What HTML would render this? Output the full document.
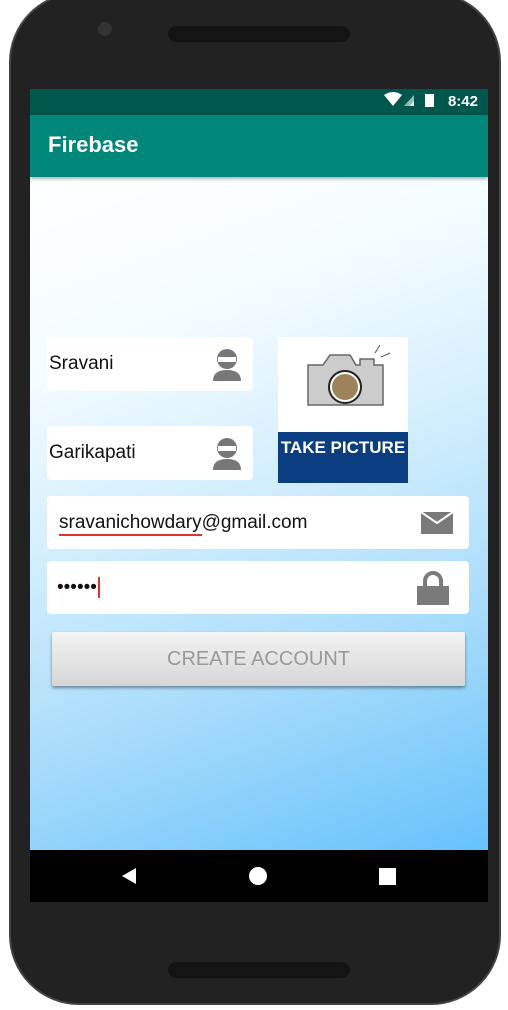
<!DOCTYPE html>
<html><head><style>
body{margin:0;width:508px;height:1010px;background:#fff;position:relative;overflow:hidden;font-family:"Liberation Sans",sans-serif}
.phone{position:absolute;left:9px;top:-8px;width:492px;height:1013px;background:#222;border-radius:70px;border:2px solid #444;box-sizing:border-box}
.screen{position:absolute;left:30px;top:89px;width:458px;height:813px;overflow:hidden}
.status{height:26px;background:#00574b;color:#fff;font-size:15px;font-weight:bold;text-align:right;padding-right:10px;line-height:26px;box-sizing:border-box}
.bar{height:62px;background:#00877a;color:#fff;font-size:22px;font-weight:bold;line-height:60px;padding-left:18px;box-shadow:0 2px 3px rgba(0,0,0,.3);position:relative;z-index:2}
.content{position:absolute;top:88px;left:0;width:458px;height:673px;background:linear-gradient(160deg,#fff 0%,#f2fbff 25%,#d4effd 45%,#a9dcfb 70%,#66c2fb 100%)}
.f{position:absolute;background:#fff;border-radius:4px;font-size:19px;color:#111;box-sizing:border-box;padding-left:2px}
.nav{position:absolute;top:761px;left:0;width:458px;height:52px;background:#000}
.btn{position:absolute;left:22px;top:455px;width:413px;height:54px;background:linear-gradient(#f3f3f3,#d6d6d6);box-shadow:0 2px 3px rgba(0,0,0,.4);border-radius:2px;color:#999;font-size:20px;text-align:center;line-height:54px}
</style></head><body>
<div class="phone">
<div style="position:absolute;left:87px;top:28px;width:14px;height:14px;border-radius:50%;background:#333"></div>
<div style="position:absolute;left:157px;top:32px;width:182px;height:16px;border-radius:8px;background:#141414"></div>
<div style="position:absolute;left:157px;top:968px;width:182px;height:16px;border-radius:8px;background:#141414"></div>
</div>
<div class="screen">
<div class="status"><svg width="60" height="16" viewBox="0 0 60 16" style="vertical-align:-2px"><path d="M0 3 Q9 -3 18 3 L9 14Z" fill="#fff"/><path d="M20 14 L30 3 V14Z" fill="#fff" opacity=".6"/><path d="M26 14 L30 9 V14Z" fill="#fff"/><rect x="41" y="2" width="9" height="13" fill="#fff"/></svg> 8:42</div>
<div class="bar">Firebase</div>
<div class="content">
<div class="f" style="left:17px;top:160px;width:206px;height:54px;line-height:54px">Sravani<svg style="position:absolute;right:10px;top:10px" width="32" height="34" viewBox="0 0 32 34"><circle cx="16" cy="12" r="10" fill="#777"/><rect x="7" y="10" width="18" height="5" fill="#fff"/><path d="M2 34 Q2 23 16 23 Q30 23 30 34Z" fill="#777"/></svg></div>
<div class="f" style="left:17px;top:249px;width:206px;height:54px;line-height:54px">Garikapati<svg style="position:absolute;right:10px;top:10px" width="32" height="34" viewBox="0 0 32 34"><circle cx="16" cy="12" r="10" fill="#777"/><rect x="7" y="10" width="18" height="5" fill="#fff"/><path d="M2 34 Q2 23 16 23 Q30 23 30 34Z" fill="#777"/></svg></div>
<div style="position:absolute;left:248px;top:160px;width:130px;height:146px;background:#fff">
<svg width="130" height="95" viewBox="0 0 130 95"><path d="M30 28 H45 L52 18 H72 L78 28 H82 V22 H96 V28 H105 V68 H30Z" fill="#ccc" stroke="#666" stroke-width="1.5"/><circle cx="67" cy="50" r="16" fill="#fff" stroke="#222" stroke-width="2"/><circle cx="67" cy="50" r="13" fill="#9c8458"/><path d="M97 16 L102 8 M103 20 L112 16" stroke="#555"/></svg>
<div style="position:absolute;top:95px;left:0;width:130px;height:51px;background:#0b3e80;color:#fff;font-weight:bold;font-size:17px;text-align:center;line-height:32px">TAKE PICTURE</div></div>
<div class="f" style="left:17px;top:319px;width:422px;height:53px;line-height:53px;padding-left:12px"><span style="display:inline-block;line-height:22px;border-bottom:2px solid #d33">sravanichowdary</span>@gmail.com<svg style="position:absolute;right:16px;top:16px" width="32" height="22"><rect width="32" height="22" fill="#7a7a7a"/><path d="M0 0 L16 11 L32 0" stroke="#fff" stroke-width="2" fill="none"/></svg></div>
<div class="f" style="left:17px;top:384px;width:422px;height:53px;line-height:53px;padding-left:10px">••••••<span style="border-left:2px solid #d33;margin-left:1px"></span><svg style="position:absolute;right:20px;top:10px" width="32" height="34"><path d="M8 16 V10 A8 8 0 0 1 24 10 V16" stroke="#7a7a7a" stroke-width="4" fill="none"/><rect y="15" width="32" height="19" fill="#7a7a7a"/></svg></div>
<div class="btn">CREATE ACCOUNT</div>
</div>
<div class="nav"><svg width="458" height="52"><path d="M92 26 L106 18 V34Z" fill="#fff"/><circle cx="228" cy="26" r="9" fill="#fff"/><rect x="349" y="18" width="17" height="17" fill="#fff"/></svg></div>
</div>
</body></html>
